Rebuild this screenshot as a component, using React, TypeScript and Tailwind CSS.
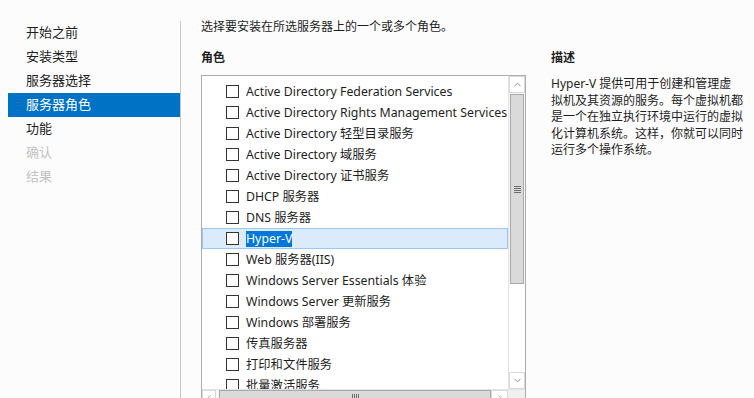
import { ChevronUp, ChevronDown, ChevronLeft, ChevronRight } from "lucide-react";

const navItems = [
    { label: "开始之前", state: "normal" },
    { label: "安装类型", state: "normal" },
    { label: "服务器选择", state: "normal" },
    { label: "服务器角色", state: "active" },
    { label: "功能", state: "normal" },
    { label: "确认", state: "disabled" },
    { label: "结果", state: "disabled" },
];

const roles = [
    "Active Directory Federation Services",
    "Active Directory Rights Management Services",
    "Active Directory 轻型目录服务",
    "Active Directory 域服务",
    "Active Directory 证书服务",
    "DHCP 服务器",
    "DNS 服务器",
    "Hyper-V",
    "Web 服务器(IIS)",
    "Windows Server Essentials 体验",
    "Windows Server 更新服务",
    "Windows 部署服务",
    "传真服务器",
    "打印和文件服务",
    "批量激活服务",
];

const descLines = [
    "Hyper-V 提供可用于创建和管理虚",
    "拟机及其资源的服务。每个虚拟机都",
    "是一个在独立执行环境中运行的虚拟",
    "化计算机系统。这样，你就可以同时",
    "运行多个操作系统。",
];

function Checkbox() {
    return <span className="w-[13px] h-[13px] border border-[#333333] bg-white shrink-0" />;
}

export default function App() {
    return (
        <div
            className="w-[754px] h-[398px] overflow-hidden bg-[#fcfcfc] text-[#1e1e1e] flex"
            style={{ fontFamily: '"Noto Sans", "Noto Sans CJK SC", sans-serif' }}
        >
            {/* wizard steps */}
            <div className="w-[180px] pt-[21px] pl-[8px] shrink-0">
                {navItems.map((item) => (
                    <div
                        key={item.label}
                        className={
                            "h-[24px] pl-[18px] flex items-center text-[13px] " +
                            (item.state === "active"
                                ? "bg-[#0072c6] text-white"
                                : item.state === "disabled"
                                ? "text-[#c3c3c3]"
                                : "text-[#1e1e1e]")
                        }
                    >
                        {item.label}
                    </div>
                ))}
            </div>

            <div className="w-px bg-[#c8c8c8] mt-[21px] shrink-0" />

            {/* main */}
            <div className="flex-1 pl-[20px] pt-[18px]">
                <p className="text-[12px] leading-[18px]">选择要安装在所选服务器上的一个或多个角色。</p>

                <div className="flex gap-[25px] mt-[13px]">
                    <div className="w-[325px] shrink-0">
                        <h3 className="text-[12px] font-bold leading-[18px] mb-[8px]">角色</h3>

                        <div className="border border-[#acacac] bg-white h-[332px] flex flex-col">
                            <div className="flex flex-1 min-h-0">
                                <div className="flex-1 overflow-hidden pt-[5px]">
                                    {roles.map((role) => {
                                        const selected = role === "Hyper-V";
                                        return (
                                            <div
                                                key={role}
                                                className={
                                                    "h-[21px] pl-[23px] flex items-center gap-[7px] whitespace-nowrap text-[12.3px] border " +
                                                    (selected
                                                        ? "bg-[#dcebfc] border-[#99c9ef]"
                                                        : "border-transparent")
                                                }
                                            >
                                                <Checkbox />
                                                <span
                                                    className={
                                                        selected
                                                            ? "bg-[#0078d7] text-white leading-[16px]"
                                                            : "leading-[16px]"
                                                    }
                                                >
                                                    {role}
                                                </span>
                                            </div>
                                        );
                                    })}
                                </div>

                                {/* vertical scrollbar */}
                                <div className="w-[17px] border-l border-[#e3e3e3] bg-[#f7f7f7] flex flex-col shrink-0">
                                    <div className="h-[17px] bg-white border border-[#d9d9d9] flex items-center justify-center">
                                        <ChevronUp size={11} strokeWidth={1.5} className="text-[#606060]" />
                                    </div>
                                    <div className="h-[190px] bg-[#dadada] border border-[#a9a9a9] mx-px mt-px flex items-center justify-center">
                                        <div className="flex flex-col gap-[1px]">
                                            <span className="w-[7px] h-px bg-[#6d6d6d]" />
                                            <span className="w-[7px] h-px bg-[#6d6d6d]" />
                                            <span className="w-[7px] h-px bg-[#6d6d6d]" />
                                            <span className="w-[7px] h-px bg-[#6d6d6d]" />
                                        </div>
                                    </div>
                                    <div className="flex-1 bg-white" />
                                    <div className="h-[17px] bg-white border border-[#d9d9d9] flex items-center justify-center">
                                        <ChevronDown size={11} strokeWidth={1.5} className="text-[#606060]" />
                                    </div>
                                </div>
                            </div>

                            {/* horizontal scrollbar */}
                            <div className="h-[17px] flex border-t border-[#e3e3e3] bg-[#f7f7f7] shrink-0">
                                <div className="w-[14px] bg-white border border-[#d9d9d9] flex items-center justify-center">
                                    <ChevronLeft size={10} strokeWidth={1.5} className="text-[#606060]" />
                                </div>
                                <div className="w-[272px] ml-[3px] bg-[#dadada] border border-[#a9a9a9] flex justify-center pt-[3px]">
                                    <div className="flex gap-[1px]">
                                        <span className="w-px h-[6px] bg-[#6d6d6d]" />
                                        <span className="w-px h-[6px] bg-[#6d6d6d]" />
                                        <span className="w-px h-[6px] bg-[#6d6d6d]" />
                                        <span className="w-px h-[6px] bg-[#6d6d6d]" />
                                    </div>
                                </div>
                                <div className="flex-1" />
                                <div className="w-[17px] bg-white border border-[#d9d9d9] flex items-center justify-center">
                                    <ChevronRight size={10} strokeWidth={1.5} className="text-[#606060]" />
                                </div>
                                <div className="w-[17px] bg-[#f0f0f0]" />
                            </div>
                        </div>
                    </div>

                    {/* description */}
                    <div className="flex-1">
                        <h3 className="text-[12px] font-bold leading-[18px] mb-[9px]">描述</h3>
                        <div className="text-[12px] leading-[16.5px]">
                            {descLines.map((line) => (
                                <div key={line} className="whitespace-nowrap">
                                    {line}
                                </div>
                            ))}
                        </div>
                    </div>
                </div>
            </div>
        </div>
    );
}
